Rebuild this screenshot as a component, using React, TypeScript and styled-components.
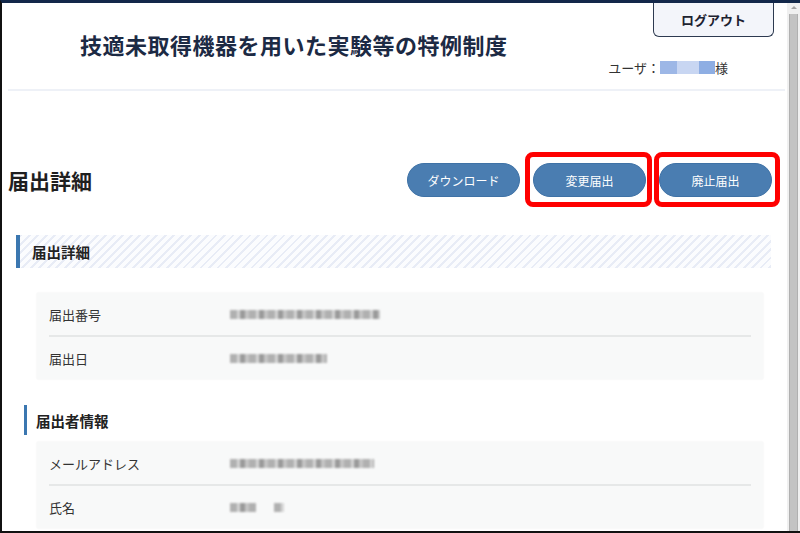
import React from "react";
import styled, { createGlobalStyle } from "styled-components";

const Global = createGlobalStyle`
  html, body { margin: 0; padding: 0; background: #fff; }
  body { font-family: "Noto Sans CJK JP", "Noto Sans", sans-serif; overflow: hidden; }
`;

const Frame = styled.div`
  width: 800px;
  height: 533px;
  box-sizing: border-box;
  border-top: 3px solid #13284a;
  border-left: 2px solid #111;
  border-bottom: 2px solid #111;
  display: flex;
  overflow: hidden;
  background: #fff;
`;

const Main = styled.div`
  flex: 1;
  min-width: 0;
  display: flex;
  flex-direction: column;
  & > * {
    flex-shrink: 0;
  }
`;

const Scrollbar = styled.div`
  width: 13px;
  flex: none;
  background: #f0f0f0;
  display: flex;
  flex-direction: column;
  align-items: center;
  margin-top: -3px;
`;

const ScrollArrow = styled.div`
  height: 14px;
  display: flex;
  align-items: center;
  justify-content: center;
  &::before {
    content: "";
    border-left: 3px solid transparent;
    border-right: 3px solid transparent;
    border-bottom: 3px solid #a3a3a3;
  }
`;

const ScrollThumb = styled.div`
  flex: 1;
  width: 9px;
  background: #c3c3c3;
  border-left: 1px solid #b0b0b0;
  border-right: 1px solid #b0b0b0;
  box-sizing: border-box;
`;

const Header = styled.header`
  height: 86px;
  margin: 0 2px 0 6px;
  border-bottom: 2px solid #eef1f7;
  display: flex;
  justify-content: space-between;
`;

const SiteTitle = styled.div`
  align-self: center;
  padding-left: 72px;
  margin-top: -4px;
  font-size: 22px;
  letter-spacing: 0.5px;
  font-weight: 700;
  color: #1c2a44;
`;

const HeaderRight = styled.div`
  display: flex;
  flex-direction: column;
  align-items: flex-end;
`;

const LogoutButton = styled.button`
  width: 121px;
  height: 34px;
  margin-right: 11px;
  margin-top: 0;
  border: 1.5px solid #2d3a50;
  border-top: none;
  border-radius: 0 0 6px 6px;
  background: #f3f5fa;
  font-family: inherit;
  font-size: 13px;
  font-weight: 700;
  color: #1c2230;
  display: flex;
  align-items: center;
  justify-content: center;
`;

const UserLine = styled.div`
  margin-top: 21px;
  margin-right: 57px;
  font-size: 13px;
  color: #333;
  display: flex;
  align-items: center;
`;

const UserName = styled.span`
  display: inline-block;
  width: 55px;
  height: 13px;
  background: linear-gradient(90deg, #9db7e6 0 30%, #c8d6f2 30% 70%, #8eaee3 70% 100%);
  filter: blur(0.6px);
`;

const PageHead = styled.div`
  margin-top: 60px;
  height: 58px;
  padding: 0 15px 0 6px;
  display: flex;
  align-items: center;
  justify-content: space-between;
`;

const PageTitle = styled.h1`
  margin: 0;
  font-size: 21px;
  font-weight: 700;
  color: #1f1f1f;
`;

const Actions = styled.div`
  display: flex;
  align-items: center;
  gap: 13px;
`;

const ActionButton = styled.button`
  width: 113px;
  height: 34px;
  border: 1px solid #3f72a6;
  border-radius: 17px;
  background: #4a7db1;
  color: #fff;
  font-family: inherit;
  font-size: 12px;
  cursor: pointer;
`;

const Highlight = styled.span<{ $left: number; $right: number }>`
  position: relative;
  display: inline-flex;
  &::after {
    content: "";
    position: absolute;
    top: -11px;
    bottom: -10px;
    left: -${(p) => p.$left}px;
    right: -${(p) => p.$right}px;
    border: 5px solid #f00;
    border-radius: 8px;
    pointer-events: none;
  }
`;

const SectionHead = styled.h2<{ $indent: number; $top: number; $striped?: boolean }>`
  margin: ${(p) => p.$top}px 16px 0 ${(p) => p.$indent}px;
  height: ${(p) => (p.$striped ? 33 : 30)}px;
  display: flex;
  align-items: center;
  padding-left: ${(p) => (p.$striped ? 12 : 9)}px;
  border-left: ${(p) => (p.$striped ? 4 : 3)}px solid #3b77b0;
  font-size: 14.5px;
  font-weight: 700;
  color: #222;
  background: ${(p) =>
    p.$striped
      ? "repeating-linear-gradient(135deg, #e8ecf6 0 2px, #fbfcfe 2px 6px)"
      : "#fff"};
`;

const Card = styled.div<{ $gap: number }>`
  margin: ${(p) => p.$gap}px 24px 26px 35px;
  padding: 0 12px;
  background: #f8f9f9;
  box-shadow: 0 0 2px rgba(0, 0, 0, 0.07);
`;

const Row = styled.div`
  height: 42px;
  display: flex;
  align-items: center;
  font-size: 13px;
  color: #333;
  & + & {
    border-top: 2px solid #e6e8e8;
  }
`;

const Label = styled.div`
  width: 181px;
  flex: none;
`;

const Masked = styled.span<{ $w: number }>`
  display: inline-block;
  width: ${(p) => p.$w}px;
  height: 9px;
  background: repeating-linear-gradient(
    90deg,
    #a4a4a4 0 7px,
    #d0d0d0 7px 10px,
    #8a8a8a 10px 15px,
    #bcbcbc 15px 19px
  );
  filter: blur(0.8px);
  opacity: 0.85;
`;

const GapSpan = styled.span`
  display: inline-block;
  width: 18px;
`;

export default function App() {
  return (
    <>
      <Global />
      <Frame>
        <Main>
          <Header>
            <SiteTitle>技適未取得機器を用いた実験等の特例制度</SiteTitle>
            <HeaderRight>
              <LogoutButton>ログアウト</LogoutButton>
              <UserLine>
                ユーザ：<UserName />様
              </UserLine>
            </HeaderRight>
          </Header>

          <PageHead>
            <PageTitle>届出詳細</PageTitle>
            <Actions>
              <ActionButton>ダウンロード</ActionButton>
              <Highlight $left={8} $right={6}>
                <ActionButton>変更届出</ActionButton>
              </Highlight>
              <Highlight $left={5} $right={8}>
                <ActionButton>廃止届出</ActionButton>
              </Highlight>
            </Actions>
          </PageHead>

          <SectionHead $indent={14} $top={26} $striped>
            届出詳細
          </SectionHead>
          <Card $gap={25}>
            <Row>
              <Label>届出番号</Label>
              <Masked $w={150} />
            </Row>
            <Row>
              <Label>届出日</Label>
              <Masked $w={97} />
            </Row>
          </Card>

          <SectionHead $indent={22} $top={0}>
            届出者情報
          </SectionHead>
          <Card $gap={7}>
            <Row>
              <Label>メールアドレス</Label>
              <Masked $w={144} />
            </Row>
            <Row>
              <Label>氏名</Label>
              <Masked $w={26} />
              <GapSpan />
              <Masked $w={10} />
            </Row>
          </Card>
        </Main>
        <Scrollbar>
          <ScrollArrow />
          <ScrollThumb />
        </Scrollbar>
      </Frame>
    </>
  );
}
